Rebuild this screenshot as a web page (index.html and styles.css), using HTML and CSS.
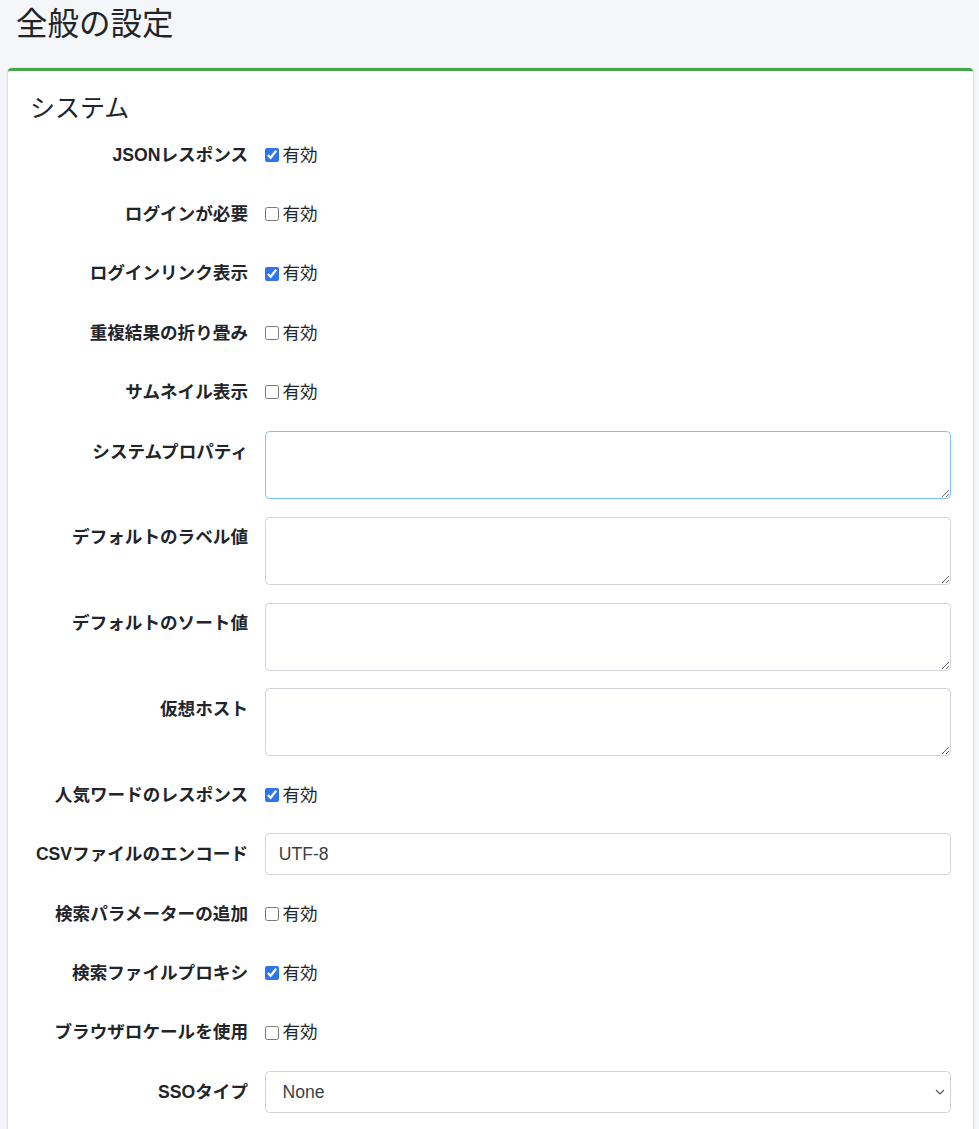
FILE: index.html
```html
<!doctype html>

<html lang="ja">
  <head>
    <meta charset="utf-8">
    <title>全般の設定</title>
    <link rel="stylesheet" href="styles.css">
  </head>

  <body>
    <div class="contentHeader">
      <h1>全般の設定</h1>
    </div>

    <div class="content">
      <div class="card">
        <div class="cardBody">
          <h3 class="sectionTitle">システム</h3>

          <div class="formRow">
            <label class="rowLabel">JSONレスポンス</label>
            <div class="rowField"><label class="check"><input type="checkbox" checked> 有効</label></div>
          </div>
          <div class="formRow">
            <label class="rowLabel">ログインが必要</label>
            <div class="rowField"><label class="check"><input type="checkbox"> 有効</label></div>
          </div>
          <div class="formRow">
            <label class="rowLabel">ログインリンク表示</label>
            <div class="rowField"><label class="check"><input type="checkbox" checked> 有効</label></div>
          </div>
          <div class="formRow">
            <label class="rowLabel">重複結果の折り畳み</label>
            <div class="rowField"><label class="check"><input type="checkbox"> 有効</label></div>
          </div>
          <div class="formRow">
            <label class="rowLabel">サムネイル表示</label>
            <div class="rowField"><label class="check"><input type="checkbox"> 有効</label></div>
          </div>
          <div class="formRow">
            <label class="rowLabel">システムプロパティ</label>
            <div class="rowField"><textarea class="formControl focused" rows="2"></textarea></div>
          </div>
          <div class="formRow">
            <label class="rowLabel">デフォルトのラベル値</label>
            <div class="rowField"><textarea class="formControl" rows="2"></textarea></div>
          </div>
          <div class="formRow">
            <label class="rowLabel">デフォルトのソート値</label>
            <div class="rowField"><textarea class="formControl" rows="2"></textarea></div>
          </div>
          <div class="formRow">
            <label class="rowLabel">仮想ホスト</label>
            <div class="rowField"><textarea class="formControl" rows="2"></textarea></div>
          </div>
          <div class="formRow">
            <label class="rowLabel">人気ワードのレスポンス</label>
            <div class="rowField"><label class="check"><input type="checkbox" checked> 有効</label></div>
          </div>
          <div class="formRow">
            <label class="rowLabel">CSVファイルのエンコード</label>
            <div class="rowField"><input class="formControl" type="text" value="UTF-8"></div>
          </div>
          <div class="formRow">
            <label class="rowLabel">検索パラメーターの追加</label>
            <div class="rowField"><label class="check"><input type="checkbox"> 有効</label></div>
          </div>
          <div class="formRow">
            <label class="rowLabel">検索ファイルプロキシ</label>
            <div class="rowField"><label class="check"><input type="checkbox" checked> 有効</label></div>
          </div>
          <div class="formRow">
            <label class="rowLabel">ブラウザロケールを使用</label>
            <div class="rowField"><label class="check"><input type="checkbox"> 有効</label></div>
          </div>
          <div class="formRow">
            <label class="rowLabel">SSOタイプ</label>
            <div class="rowField selectWrap">
              <select class="formControl">
                <option selected>None</option>
                <option>OpenID Connect</option>
                <option>SAML</option>
                <option>SPNEGO</option>
              </select>
              <svg class="selectArrow" width="10" height="6" viewBox="0 0 10 6"><polyline points="1,1 5,5 9,1" fill="none" stroke="#555" stroke-width="1.2"/></svg>
            </div>
          </div>
        </div>
      </div>
    </div>
  </body>
</html>
```

FILE: styles.css
```css
html {
  overflow: hidden;
}

body {
  margin: 0;
  background: #f4f6f9;
  color: #212529;
  font-family: "Liberation Sans", "Noto Sans CJK JP", sans-serif;
  font-size: 17.6px;
  line-height: 1.5;
}

.contentHeader {
  padding: 5px 16px 25px 16px;
}

.contentHeader h1 {
  margin: 0;
  font-size: 31.5px;
  font-weight: 400;
  line-height: 38px;
}

.content {
  padding: 0 6px 0 8px;
}

.card {
  background: #fff;
  border-top: 3px solid #44a848;
  border-radius: 4px;
  box-shadow: 0 0 1px rgba(0, 0, 0, .125), 0 1px 3px rgba(0, 0, 0, .2);
}

.cardBody {
  padding: 22px 22px 200px 22px;
}

.sectionTitle {
  margin: 0 0 11px 0;
  font-size: 25px;
  font-weight: 400;
  line-height: 30px;
}

.formRow {
  display: grid;
  grid-template-columns: 218px 1fr;
  column-gap: 16.5px;
  margin-bottom: 17.6px;
}

.rowLabel {
  padding: 7.7px 0;
  line-height: 26.4px;
  font-weight: 700;
  text-align: right;
  white-space: nowrap;
}

.rowField {
  display: flex;
  align-items: center;
  min-height: 41.8px;
}

.check {
  display: flex;
  align-items: center;
  line-height: 26.4px;
}

.check input {
  width: 14px;
  height: 14px;
  margin: 0 4px 0 0;
  accent-color: #2f74ea;
}

.formControl {
  box-sizing: border-box;
  display: block;
  width: 100%;
  height: 41.8px;
  padding: 6.6px 13.2px;
  border: 1px solid #ced4da;
  border-radius: 4.4px;
  background: #fff;
  color: #3a3f44;
  font-family: "Liberation Sans", "Noto Sans CJK JP", sans-serif;
  font-size: 17.6px;
  line-height: 26.4px;
  outline: none;
}

textarea.formControl {
  height: 68.2px;
  resize: vertical;
}

.formControl.focused {
  border-color: #80bdff;
}

.rowField:has(textarea) {
  align-items: flex-start;
}

.selectWrap {
  position: relative;
}

select.formControl {
  appearance: none;
  padding-left: 17px;
}

.selectArrow {
  position: absolute;
  right: 6px;
  top: 18px;
}
```
